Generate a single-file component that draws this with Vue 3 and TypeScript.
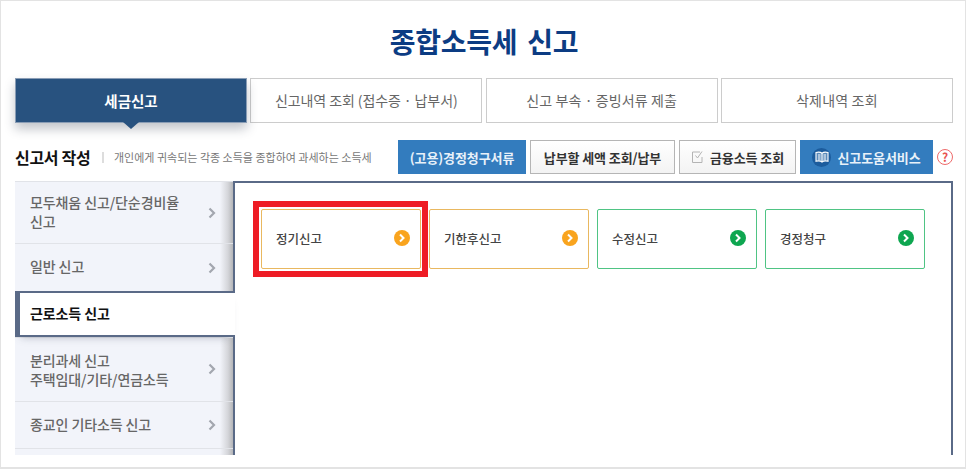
<script setup lang="ts">
interface NavItem { lines: string[]; height: number; active?: boolean }
interface Card { label: string; tone: 'orange' | 'green' }
const tabs: string[] = ['세금신고', '신고내역 조회 (접수증 · 납부서)', '신고 부속 · 증빙서류 제출', '삭제내역 조회']
const navItems: NavItem[] = [
  { lines: ['모두채움 신고/단순경비율', '신고'], height: 62 },
  { lines: ['일반 신고'], height: 48 },
  { lines: ['근로소득 신고'], height: 46, active: true },
  { lines: ['분리과세 신고', '주택임대/기타/연금소득'], height: 64 },
  { lines: ['종교인 기타소득 신고'], height: 47 },
  { lines: [], height: 46 },
]
const cards: Card[] = [
  { label: '정기신고', tone: 'orange' },
  { label: '기한후신고', tone: 'orange' },
  { label: '수정신고', tone: 'green' },
  { label: '경정청구', tone: 'green' },
]
</script>

<template>
  <div class="page">
    <h1 class="title">종합소득세 신고</h1>

    <div class="tabs">
      <div v-for="(t, i) in tabs" :key="t" class="tab" :class="{ on: i === 0 }">{{ t }}</div>
    </div>

    <div class="bar">
      <strong class="bar-title">신고서 작성</strong>
      <span class="bar-sep"></span>
      <span class="bar-desc">개인에게 귀속되는 각종 소득을 종합하여 과세하는 소득세</span>
      <div class="btns">
        <button class="btn blue w1">(고용)경정청구서류</button>
        <button class="btn plain w2">납부할 세액 조회/납부</button>
        <button class="btn plain w3">
          <svg width="14" height="14" viewBox="0 0 14 14" fill="none" stroke="#b4b4b4" stroke-width="1">
            <path d="M11 7v5.5H1.5V2H9" />
            <path d="M4.5 5.5l2 2.5 4.5-6.5" />
          </svg>
          금융소득 조회
        </button>
        <button class="btn blue w4">
          <span class="book">
            <svg width="14" height="12" viewBox="0 0 14 12" fill="none" stroke="#fff" stroke-width="1.1">
              <path d="M7 2.2C5.5 1 3 1 1 1.5v8.7c2-.5 4.5-.5 6 .8 1.5-1.3 4-1.3 6-.8V1.5C11 1 8.500 1 7 2.2z" fill="#cfe0f2" fill-opacity=".35" />
              <path d="M7 2.2V11M3 4h2.5M3 6h2.5M3 8h2.5M8.5 4H11M8.5 6H11M8.5 8H11" />
            </svg>
          </span>
          신고도움서비스
        </button>
        <span class="help">?</span>
      </div>
    </div>

    <div class="work">
      <ul class="nav">
        <li
          v-for="(n, i) in navItems"
          :key="i"
          class="nav-item"
          :class="{ active: n.active }"
          :style="{ height: n.height + 'px' }"
        >
          <span class="nav-text"><span v-for="l in n.lines" :key="l" class="nav-line">{{ l }}</span></span>
          <svg v-if="n.lines.length && !n.active" class="chev" width="8" height="12" viewBox="0 0 8 12" fill="none" stroke="#a3a7af" stroke-width="2.2">
            <path d="M1.5 1.5L6 6l-4.5 4.5" />
          </svg>
        </li>
      </ul>
      <div class="panel">
        <div class="cards">
          <div v-for="c in cards" :key="c.label" class="card" :class="c.tone">
            <span class="card-label">{{ c.label }}</span>
            <span class="dot">
              <svg width="8" height="10" viewBox="0 0 8 10" fill="none" stroke="#fff" stroke-width="2">
                <path d="M2 1.5L5.5 5 2 8.5" />
              </svg>
            </span>
          </div>
          <div class="mark"></div>
        </div>
      </div>
    </div>
  </div>
</template>

<style>
html, body { margin: 0; background: #fff; }
</style>

<style scoped>
.page {
  box-sizing: border-box;
  width: 966px;
  height: 469px;
  border: 1px solid #e3e3e3;
  border-bottom-width: 2px;
  padding: 0 12px 0 14px;
  font-family: "Noto Sans CJK KR", "Noto Sans", sans-serif;
  overflow: hidden;
}
.title {
  margin: 20px 0 0;
  height: 57px;
  font-size: 28px;
  line-height: 40px;
  font-weight: 700;
  color: #0c3c83;
  text-align: center;
  word-spacing: 4px;
  letter-spacing: -0.25px;
}
.tabs {
  display: grid;
  grid-template-columns: 232px 232px 232px 232px;
  column-gap: 3.3px;
  height: 45px;
  width: 939px;
}
.tab {
  box-sizing: border-box;
  border: 1px solid #cccccc;
  background: #fff;
  color: #666;
  font-size: 14px;
  line-height: 43px;
  text-align: center;
  letter-spacing: 0.2px;
}
.tab:nth-child(2) { letter-spacing: -0.1px; }
.tab:nth-child(3) { letter-spacing: 0.1px; }
.tab.on {
  position: relative;
  background: #28527f;
  border-color: #8a9db5;
  color: #fff;
  font-weight: 700;
  font-size: 14.5px;
  letter-spacing: 0;
  box-shadow: 0 6px 10px rgba(40, 50, 70, 0.28);
}
.tab.on::after {
  content: "";
  position: absolute;
  left: 107px;
  bottom: -7px;
  border-left: 8px solid transparent;
  border-right: 8px solid transparent;
  border-top: 7px solid #28527f;
}
.bar {
  display: flex;
  align-items: center;
  height: 34px;
  margin-top: 17px;
  width: 939px;
}
.bar-title {
  width: 75px;
  flex: none;
  font-size: 16px;
  font-weight: 700;
  color: #111;
  letter-spacing: -0.3px;
  white-space: nowrap;
}
.bar-sep {
  width: 2px;
  height: 11px;
  margin: 0 10px 0 12px;
  background: #dddddd;
}
.bar-desc {
  width: 284px;
  flex: none;
  font-size: 11px;
  color: #777;
  letter-spacing: 0;
  white-space: nowrap;
}
.btns {
  display: flex;
  align-items: center;
  gap: 4px;
}
.btn {
  box-sizing: border-box;
  display: flex;
  align-items: center;
  justify-content: center;
  height: 34px;
  padding: 0;
  font: 700 13px "Noto Sans CJK KR", "Noto Sans", sans-serif;
  letter-spacing: -0.1px;
  white-space: nowrap;
}
.btn.blue {
  background: #337cbe;
  border: 1px solid #337cbe;
  color: #e8f1f9;
}
.btn.plain {
  background: linear-gradient(#fff, #f3f3f3);
  border: 1px solid #b5b5b5;
  color: #333;
}
.w1 { width: 128px; }
.w2 { width: 145px; }
.w3 { width: 117px; gap: 5px; }
.w4 { width: 133px; gap: 6px; }
.book {
  display: flex;
  align-items: center;
  justify-content: center;
  width: 19px;
  height: 19px;
  border-radius: 50%;
  background: #1c5c9d;
}
.help {
  box-sizing: border-box;
  width: 16px;
  height: 16px;
  border: 1.5px solid #ee6a6a;
  border-radius: 50%;
  color: #e8534f;
  font-size: 12px;
  font-weight: 700;
  line-height: 13px;
  text-align: center;
}
.work {
  display: flex;
  width: 938px;
  height: 274px;
  margin-top: 7px;
  overflow: hidden;
}
.nav {
  flex: none;
  width: 220px;
  margin: 0;
  padding: 0;
  list-style: none;
  position: relative;
  z-index: 2;
}
.nav-item {
  box-sizing: border-box;
  position: relative;
  width: 218px;
  display: flex;
  align-items: center;
  justify-content: space-between;
  padding: 0 17px 2px 15px;
  border-top: 1px solid #e1e3e8;
  background: linear-gradient(to right, #f2f4fa 0, #f2f4fa 205px, #d4d5d9 213px, #b4b5b8 218px);
  font-size: 14px;
  font-weight: 500;
  line-height: 19px;
  color: #666;
  letter-spacing: -0.1px;
}
.nav-item.active {
  width: 220px;
  border: 2px solid #5a6a87;
  border-left-width: 5px;
  border-right: 0;
  padding-left: 10px;
  background: #fff;
  color: #111;
  font-weight: 700;
  box-shadow: 0 6px 8px -6px rgba(60, 70, 90, 0.35);
  z-index: 1;
}
.nav-item:nth-child(4) { padding-bottom: 0; }
.chev { position: relative; top: 1px; }
.nav-item:nth-child(4) .chev { top: -1px; }
.nav-line { display: block; white-space: nowrap; }
.panel {
  flex: 1;
  margin-left: -2px;
  border: 2px solid #5a6a87;
  border-bottom: 0;
  background: #fff;
  padding: 26px 0 0 26px;
}
.cards {
  position: relative;
  display: flex;
  gap: 8px;
}
.card {
  box-sizing: border-box;
  width: 160px;
  height: 60px;
  display: flex;
  align-items: center;
  justify-content: space-between;
  padding: 0 10px 2px 14px;
  background: #fff;
  border: 1px solid;
  border-radius: 2px;
  font-size: 12.5px;
  font-weight: 500;
  color: #444;
  letter-spacing: 0;
}
.card.orange { border-color: #e9b860; }
.card.green { border-color: #4fc484; }
.dot {
  display: flex;
  align-items: center;
  justify-content: center;
  width: 16px;
  height: 16px;
  border-radius: 50%;
}
.orange .dot { background: #f9a41e; }
.green .dot { background: #0ea650; }
.mark {
  position: absolute;
  left: -8px;
  top: -8px;
  box-sizing: border-box;
  width: 175px;
  height: 76px;
  border: 6px solid #ee1c25;
}
</style>
